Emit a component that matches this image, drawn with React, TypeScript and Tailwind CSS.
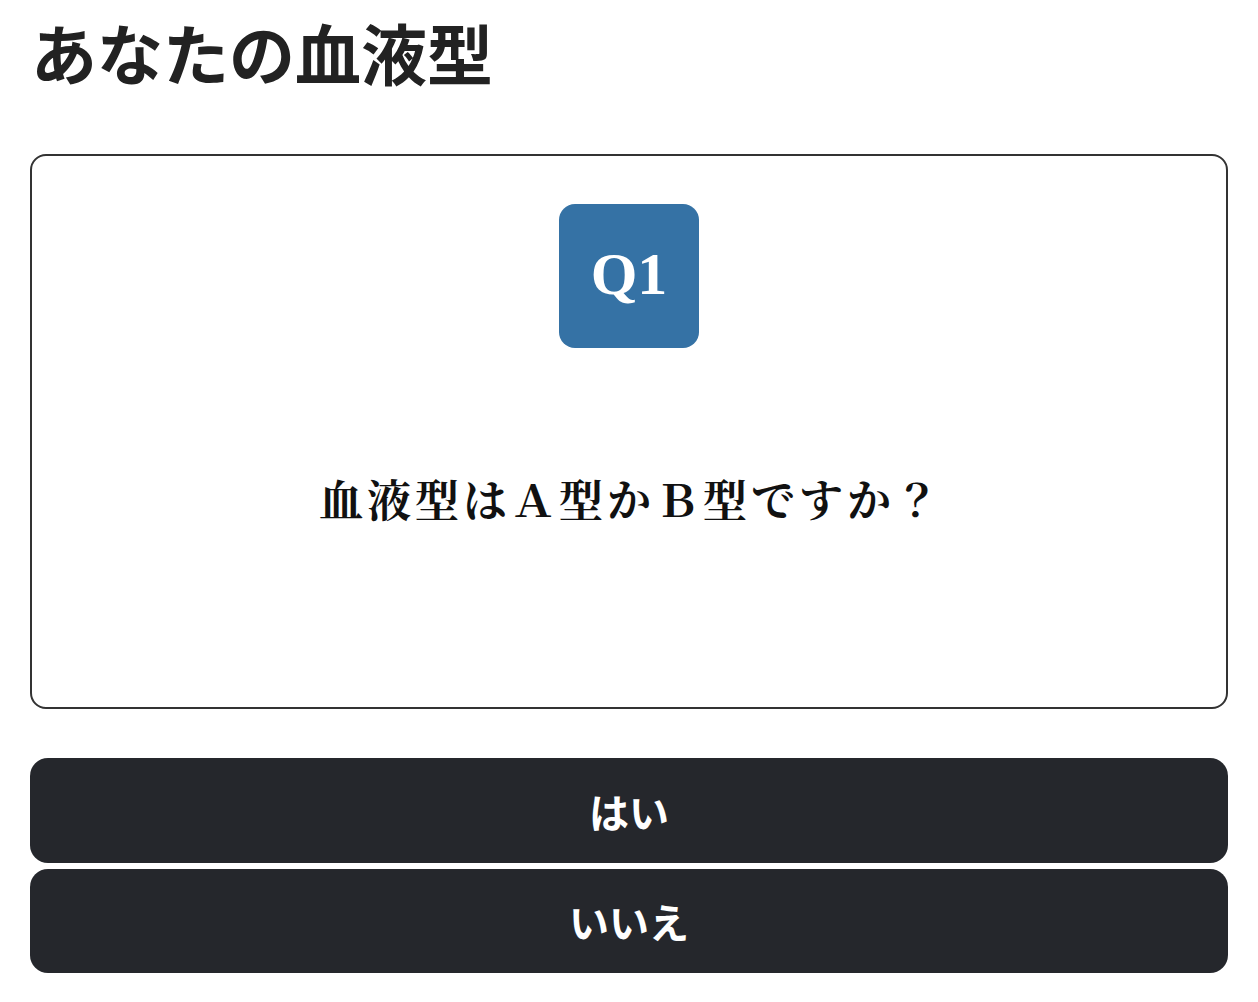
const App = () => {
  return (
    <div
      className="min-h-screen bg-white px-[30px] pt-[11px] text-[#222]"
      style={{ fontFamily: '"Noto Sans CJK JP", "Noto Sans", sans-serif' }}
    >
      {/* Title */}
      <h1 className="text-[66px] font-bold leading-[80px] pl-[1px]">あなたの血液型</h1>

      {/* Question card */}
      <div className="mt-[63px] h-[555px] rounded-[16px] border-2 border-[#333] flex flex-col items-center pt-[48px]">
        <div className="w-[140px] h-[144px] rounded-[16px] bg-[#3572a5] flex items-center justify-center">
          <span className="text-white text-[60px] font-bold font-['Liberation_Serif',serif] leading-none pb-[4px]">
            Q1
          </span>
        </div>
        <p className="mt-[117px] pl-[4px] text-[44px] leading-[66px] tracking-[4px] font-bold text-[#111] font-['Noto_Serif_CJK_JP','Liberation_Serif','Noto_Sans_CJK_JP',serif]">
          血液型はＡ型かＢ型ですか？
        </p>
      </div>

      {/* Answers */}
      <div className="mt-[49px] flex flex-col gap-[6px]">
        <button className="h-[105px] rounded-[18px] bg-[#25272c] text-white text-[40px] font-bold">
          はい
        </button>
        <button className="h-[104px] rounded-[18px] bg-[#25272c] text-white text-[40px] font-bold">
          いいえ
        </button>
      </div>
    </div>
  );
};

export default App;
